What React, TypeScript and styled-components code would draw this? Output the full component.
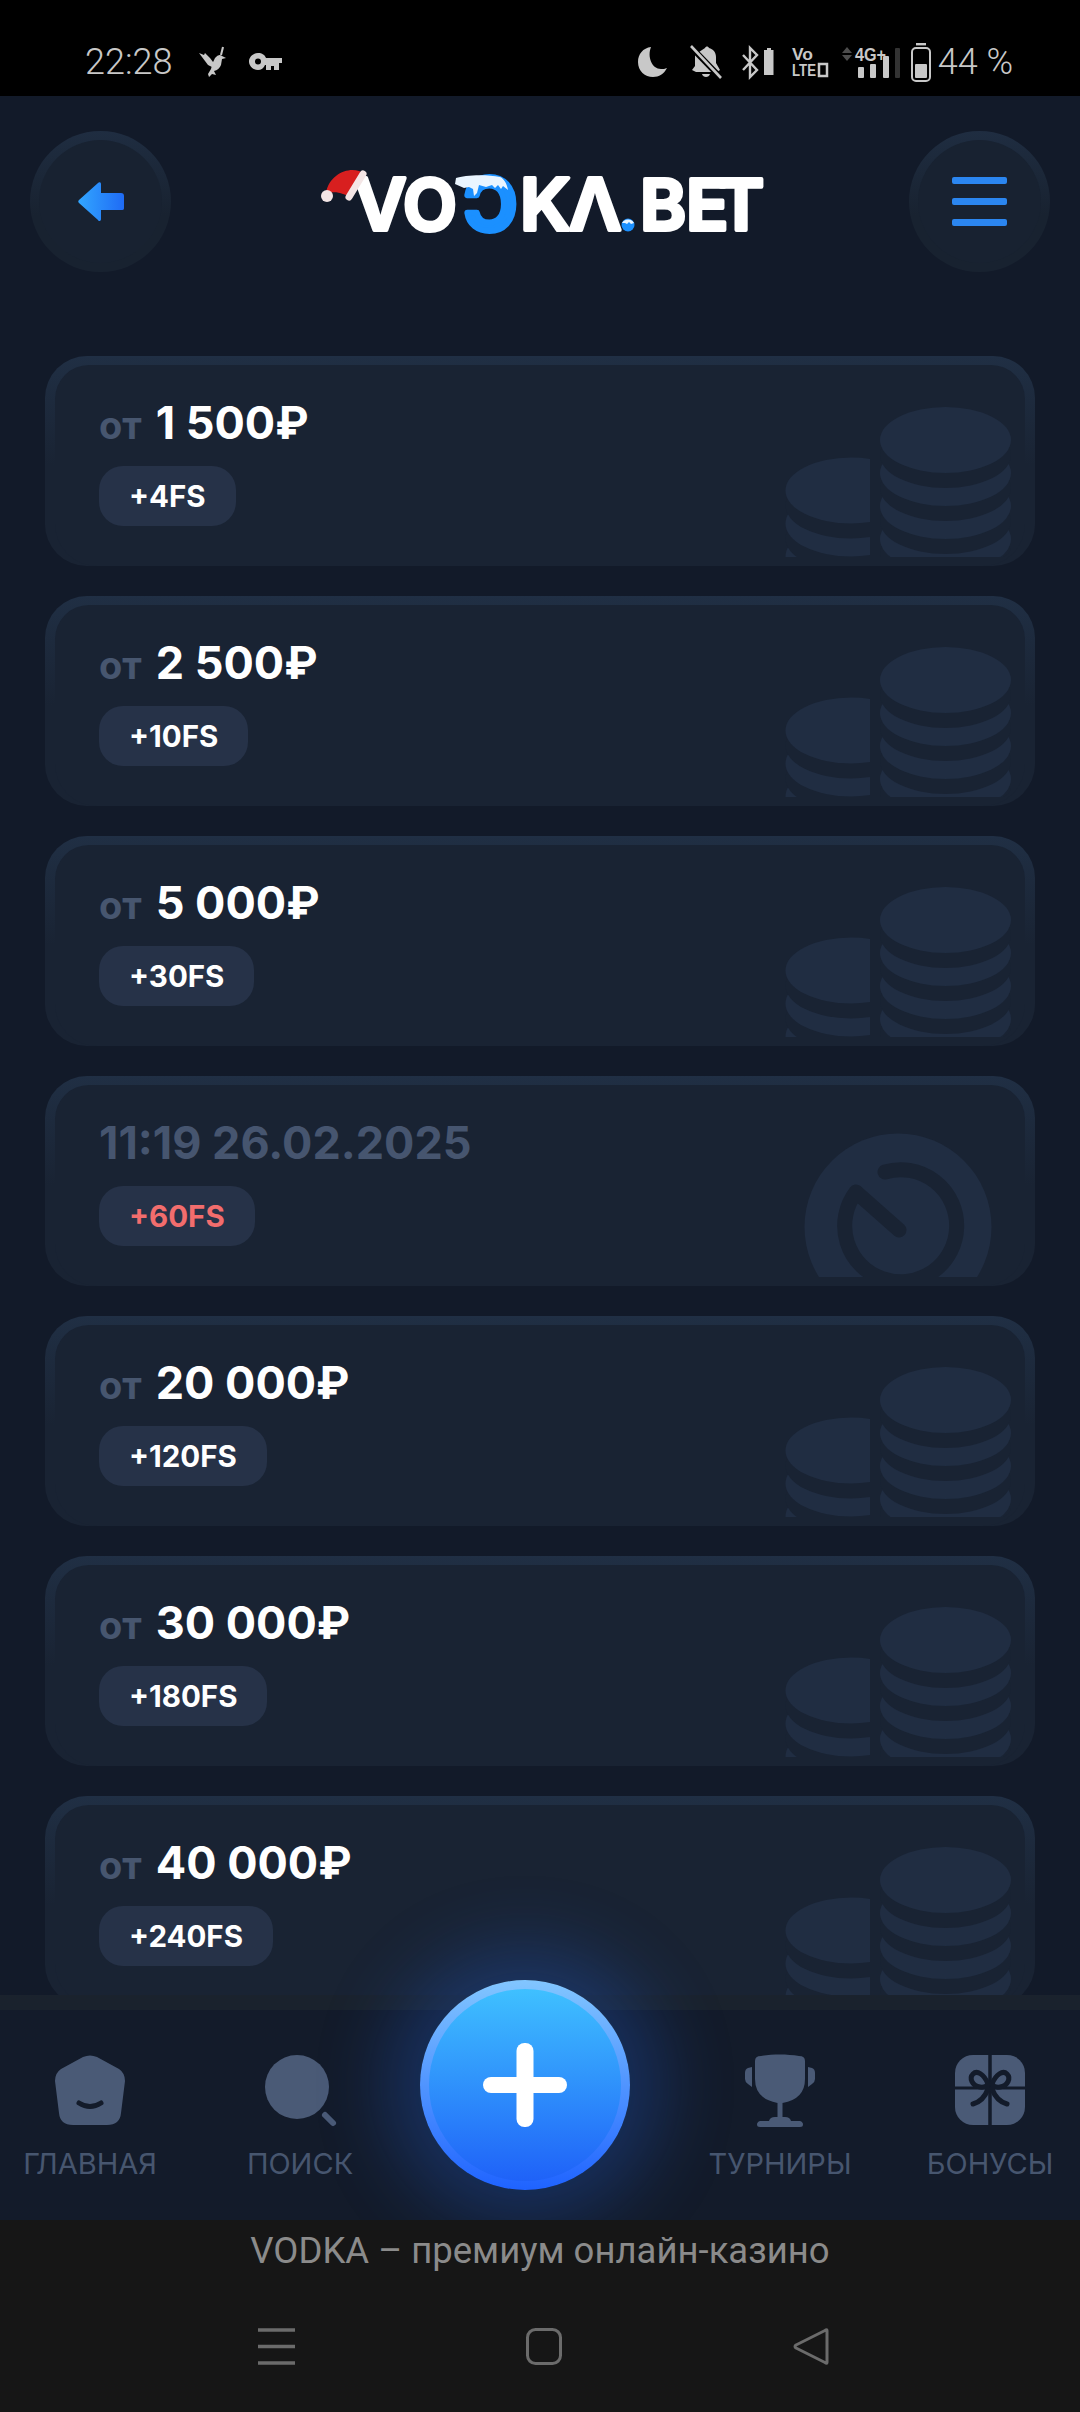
import { FC } from 'react'
import styled, { createGlobalStyle } from 'styled-components'

const GlobalStyle = createGlobalStyle`
  html, body {
    margin: 0;
    padding: 0;
    background: #121a29;
  }
  * {
    box-sizing: border-box;
  }
`

const Screen = styled.div`
  display: flex;
  flex-direction: column;
  width: 1080px;
  height: 2412px;
  overflow: hidden;
  background: #121a29;
  font-family: Inter, 'Liberation Sans', sans-serif;
`

/* status bar */

const StatusBar = styled.div`
  display: flex;
  align-items: center;
  justify-content: space-between;
  flex: none;
  height: 96px;
  padding: 0 67px 0 85px;
  background: #000;
  color: #c8c8c8;
`

const StatusGroup = styled.div`
  display: flex;
  align-items: center;
  height: 48px;
  margin-top: 28px;
`

const StatusText = styled.span`
  font-family: Roboto, 'Liberation Sans', sans-serif;
  font-size: 36px;
  font-weight: 300;
  line-height: 48px;
  white-space: nowrap;
`

const StatusSlot = styled.div<{ $gap: number }>`
  display: flex;
  margin-left: ${({ $gap }) => $gap}px;
`

/* header */

const Main = styled.main`
  flex: 1;
  min-height: 0;
  overflow: hidden;
`

const Header = styled.header`
  display: flex;
  align-items: center;
  justify-content: space-between;
  height: 141px;
  margin-top: 35px;
  padding: 0 30px;
`

const RoundButton = styled.button`
  display: flex;
  align-items: stretch;
  width: 141px;
  height: 141px;
  padding: 9px;
  border: 0;
  border-radius: 50%;
  background: linear-gradient(180deg, #1f2d41 0%, #182230 60%);
`

const RoundInner = styled.span`
  display: flex;
  flex-direction: column;
  align-items: center;
  justify-content: center;
  gap: 14px;
  width: 100%;
  border-radius: 50%;
  background: #182231;
`

const BurgerLine = styled.span`
  width: 55px;
  height: 7px;
  border-radius: 2px;
  background: #2b86f0;
`

const LogoArt = styled.svg`
  overflow: visible;
`

/* bonus cards */

const CardList = styled.div`
  display: flex;
  flex-direction: column;
  gap: 30px;
  margin-top: 84px;
  padding: 0 45px;
`

const Card = styled.div`
  flex: none;
  height: 210px;
  padding: 9px 10px 0;
  border-radius: 42px;
  background: linear-gradient(180deg, #202f44 0%, #192333 52%);
`

const CardInner = styled.div`
  position: relative;
  height: 100%;
  padding: 36px 0 0 44px;
  border-radius: 34px 34px 42px 42px;
  background: #192333;
`

const Amount = styled.div`
  display: flex;
  align-items: baseline;
  gap: 14px;
  height: 44px;
  font-size: 45px;
  font-weight: 700;
  line-height: 44px;
  color: #fff;
`

const From = styled.span`
  font-size: 38px;
  color: #47566f;
`

const DateText = styled.div`
  height: 44px;
  font-size: 45px;
  font-weight: 700;
  line-height: 44px;
  color: #46556f;
`

const Pill = styled.div<{ $expired?: boolean }>`
  display: inline-flex;
  align-items: center;
  height: 60px;
  margin-top: 21px;
  padding: 0 30px;
  border-radius: 24px;
  background: #263248;
  font-size: 29.5px;
  font-weight: 700;
  line-height: 58px;
  color: ${({ $expired }) => ($expired ? '#f26d6d' : '#fff')};
`

const CardArt = styled.svg`
  position: absolute;
  top: 0;
  right: 0;
`

/* bottom nav */

const Nav = styled.nav`
  position: relative;
  display: grid;
  grid-template-columns: 180px 240px 240px 240px 180px;
  flex: none;
  height: 225px;
  border-top: 15px solid #1a222d;
  background: #131b2a;
`

const NavItem = styled.div`
  display: flex;
  flex-direction: column;
  align-items: center;
  padding-top: 45px;
`

const NavIcon = styled.svg`
  display: block;
  width: 70px;
  height: 70px;
  overflow: visible;
  color: #4a5a76;
`

const NavLabel = styled.span`
  margin-top: 22px;
  font-size: 29px;
  line-height: 34px;
  color: #47566f;
  white-space: nowrap;
`

const PlusButton = styled.button`
  position: absolute;
  top: -30px;
  left: 420px;
  display: flex;
  width: 210px;
  height: 210px;
  padding: 9px;
  border: 0;
  border-radius: 50%;
  background: linear-gradient(180deg, #82c6ff 0%, #1f63ff 100%);
  box-shadow: 0 0 70px 34px rgba(36, 102, 225, 0.28);
`

const PlusInner = styled.span`
  display: flex;
  align-items: center;
  justify-content: center;
  width: 100%;
  border-radius: 50%;
  background: linear-gradient(180deg, #3fc0ff 0%, #1f62f8 100%);
`

/* browser + system bars */

const BrowserBar = styled.div`
  position: relative;
  z-index: 2;
  flex: none;
  height: 192px;
  background: #161616;
`

const PageTitle = styled.div`
  padding-top: 9px;
  font-family: Roboto, 'Liberation Sans', sans-serif;
  font-size: 36.5px;
  line-height: 44px;
  text-align: center;
  color: #8b8b8b;
`

const SystemNav = styled.div`
  display: flex;
  align-items: center;
  gap: 231px;
  margin-top: 55px;
  padding-left: 258px;
`

const StatusSvg = styled.svg`
  display: block;
  overflow: visible;
`

const MoonIcon = () => (
  <StatusSvg width="29" height="30" viewBox="0 0 29 30">
    <path
      d="M13 0C5 1 0 7 0 15c0 9 7 15 15 15 6 0 11-3 14-9-2 1-4 1-6 1C14 22 9 10 13 0Z"
      fill="currentColor"
    />
  </StatusSvg>
)

const BellOffIcon = () => (
  <StatusSvg width="32" height="33" viewBox="0 0 32 33">
    <path
      d="M15 2c1-2 3-2 4 0 4 1 7 4 7 9v6l4 7-3 2H6l-4-2 3-4v-9c0-1 0-2 1-3Z"
      fill="currentColor"
    />
    <path d="M12 28h8c-1 4-7 4-8 0Z" fill="currentColor" />
    <path d="M0 0 32 33" stroke="#000" strokeWidth="6" />
    <path d="M1 0 31 32" stroke="currentColor" strokeWidth="2.6" />
  </StatusSvg>
)

const BluetoothIcon = () => (
  <StatusSvg width="33" height="33" viewBox="0 0 33 33">
    <path d="M1 9 15 24 8 31V2l7 7L1 24" fill="none" stroke="currentColor" strokeWidth="2.4" />
    <path d="M25 2h4v2h2.500v25H22V4h3Z" fill="currentColor" />
  </StatusSvg>
)

const VolteIcon = () => (
  <StatusSvg width="36" height="30" viewBox="0 0 36 30">
    <text
      x="0"
      y="13"
      fontFamily="Liberation Sans"
      fontWeight="700"
      fontSize="17"
      fill="currentColor"
      textLength="21"
      lengthAdjust="spacingAndGlyphs"
    >
      Vo
    </text>
    <text
      x="0"
      y="29"
      fontFamily="Liberation Sans"
      fontWeight="700"
      fontSize="16"
      fill="currentColor"
      textLength="24"
      lengthAdjust="spacingAndGlyphs"
    >
      LTE
    </text>
    <path d="M27 17h8v12h-8Z" fill="none" stroke="currentColor" strokeWidth="2.500" />
  </StatusSvg>
)

const SignalIcon = () => (
  <StatusSvg width="58" height="31" viewBox="0 0 58 31">
    <path d="M5 0 10 6H0ZM0 8h10L5 14Z" fill="#4c4c4c" />
    <text
      x="13"
      y="14"
      fontFamily="Liberation Sans"
      fontWeight="700"
      fontSize="18"
      fill="currentColor"
      textLength="31"
      lengthAdjust="spacingAndGlyphs"
    >
      4G+
    </text>
    <rect x="16" y="20" width="6" height="11" rx="1" fill="currentColor" />
    <rect x="28" y="17" width="6" height="14" rx="1" fill="currentColor" />
    <rect x="41" y="9" width="6" height="22" rx="1" fill="currentColor" />
    <rect x="53" y="1" width="5" height="30" rx="1" fill="#333" />
  </StatusSvg>
)

const BatteryIcon = () => (
  <StatusSvg width="20" height="39" viewBox="0 0 20 39">
    <rect x="5" y="0" width="10" height="2.400" fill="currentColor" />
    <rect x="1" y="5" width="18" height="33" rx="4" fill="none" stroke="currentColor" strokeWidth="2" />
    <rect x="4" y="21" width="12" height="14" rx="1" fill="currentColor" />
  </StatusSvg>
)

const DoveIcon = () => (
  <StatusSvg width="28" height="30" viewBox="0 0 28 30">
    <path d="M0 6 5 8 6 6 11 11 14 15 16 18 15 21 9 18 6 14 3 10Z" fill="currentColor" />
    <path
      d="M16 11Q20 6 23 9L27 11 23 12 22 18Q20 23 15 24L17 28 13 27 10 30 9 27 12 22Q13 16 16 11Z"
      fill="currentColor"
    />
    <path d="M24 0 22 8" stroke="currentColor" strokeWidth="2" />
  </StatusSvg>
)

const KeyIcon = () => (
  <StatusSvg width="33" height="18" viewBox="0 0 33 18">
    <path
      fillRule="evenodd"
      d="M9 0c4 0 7 2 8 5h16v5h-3v7h-5v-4h-3v4h-5v-5h-1c-1 3-4 5-7 5-5 0-9-4-9-8.500S4 0 9 0Zm0 5.500a3 3 0 1 0 0 6 3 3 0 0 0 0-6Z"
      fill="currentColor"
    />
  </StatusSvg>
)

const BackArrow = () => (
  <svg width="46" height="39" viewBox="0 0 46 39">
    <defs>
      <linearGradient id="backFill" x1="0" y1="0" x2="1" y2="0">
        <stop offset="0" stopColor="#32a6ff" />
        <stop offset="1" stopColor="#1f6bf5" />
      </linearGradient>
    </defs>
    <path
      d="M20 1c1-1 3-1 3 1v9h20c2 0 3 1 3 3v12c0 2-1 2-3 2H23v9c0 2-2 3-3 1L1 21c-1-1-1-2 0-3Z"
      fill="url(#backFill)"
    />
  </svg>
)

const Logo = () => (
  <LogoArt width="450" height="76" viewBox="-4 -2 450 76">
    <g
      fontFamily="Inter, sans-serif"
      fontSize="72"
      fontWeight="600"
      stroke="#fff"
      strokeWidth="4"
      strokeLinejoin="round"
      fill="#fff"
    >
      <text x="35" y="64">
        V
      </text>
      <text x="84" y="64" fontSize="70">
        O
      </text>
      <text x="201" y="64">
        K
      </text>
      <text x="250" y="64">
        Λ
      </text>
      <text x="321" y="64" fontSize="70">
        B
      </text>
      <text x="367" y="64" fontSize="70">
        E
      </text>
      <text x="399" y="64" fontSize="70">
        T
      </text>
      <text x="145" y="64" fill="#1b90ff" stroke="#1b90ff" strokeWidth="6">
        Ɔ
      </text>
    </g>
    <circle cx="309" cy="59" r="6.500" fill="#1b90ff" />
    <path d="M303 57c2-4 9-5 12 0l-3 1-2-2-2 2-2-1Z" fill="#e8f4ff" />
    <path
      d="M137 12c8-3 30-4 44-1 3 1 7 6 8 13l-5-4-2 3-3-4-3 3-3-3-6 2-7-2-2 8-3 3-1-7-4-2-5 1-9-4Z"
      fill="#eaf5ff"
    />
    <path d="M7 27C10 9 28 1 40 5c3 1 4 4 4 8l-11 18-9-3c-5-2-10-2-17-1Z" fill="#d81f1f" />
    <path d="M44 8 30 31" stroke="#f4e6e6" strokeWidth="7" strokeLinecap="round" />
    <circle cx="8" cy="30" r="6" fill="#f4e6e6" />
  </LogoArt>
)

const CoinStack: FC<{ cx: number; top: number; count: number }> = ({ cx, top, count }) => {
  const centers = Array.from({ length: count }, (_, i) => top + i * 33).reverse()
  return (
    <>
      {centers.map((cy, i) => (
        <g key={cy}>
          <ellipse cx={cx} cy={cy} rx="65.500" ry="33" fill="#202d42" />
          {i < centers.length - 1 && <ellipse cx={cx} cy={cy - 18} rx="65.500" ry="33" fill="#192333" />}
        </g>
      ))}
    </>
  )
}

const CoinsArt = () => (
  <CardArt width="300" height="192" viewBox="0 0 300 192">
    <defs>
      <clipPath id="coinsLeft">
        <rect x="0" y="0" width="145" height="192" />
      </clipPath>
      <clipPath id="coinsRight">
        <path d="M150 0h136v180c0 8-4 12-12 12H150Z" />
      </clipPath>
    </defs>
    <g clipPath="url(#coinsLeft)">
      <CoinStack cx={126} top={125.5} count={3} />
    </g>
    <g clipPath="url(#coinsRight)">
      <CoinStack cx={220.5} top={75} count={5} />
    </g>
  </CardArt>
)

const TimerArt = () => (
  <CardArt width="300" height="192" viewBox="0 0 300 192">
    <circle cx="173" cy="142" r="93.500" fill="#202d42" />
    <path
      d="M160 87A56 56 0 1 1 131 107L174 145"
      fill="none"
      stroke="#192333"
      strokeWidth="15"
      strokeLinecap="round"
      strokeLinejoin="round"
    />
  </CardArt>
)

type Bonus = {
  amount?: string
  date?: string
  fs: string
}

const bonuses: Bonus[] = [
  { amount: '1 500₽', fs: '+4FS' },
  { amount: '2 500₽', fs: '+10FS' },
  { amount: '5 000₽', fs: '+30FS' },
  { date: '11:19 26.02.2025', fs: '+60FS' },
  { amount: '20 000₽', fs: '+120FS' },
  { amount: '30 000₽', fs: '+180FS' },
  { amount: '40 000₽', fs: '+240FS' },
]

const BonusCard: FC<Bonus> = ({ amount, date, fs }) => (
  <Card>
    <CardInner>
      {date ? (
        <DateText>{date}</DateText>
      ) : (
        <Amount>
          <From>от</From>
          {amount}
        </Amount>
      )}
      <Pill $expired={!!date}>{fs}</Pill>
      {date ? <TimerArt /> : <CoinsArt />}
    </CardInner>
  </Card>
)

const App = () => {
  return (
    <Screen>
      <GlobalStyle />
      <StatusBar>
        <StatusGroup>
          <StatusText>22:28</StatusText>
          <StatusSlot $gap={27}>
            <DoveIcon />
          </StatusSlot>
          <StatusSlot $gap={22}>
            <KeyIcon />
          </StatusSlot>
        </StatusGroup>
        <StatusGroup>
          <MoonIcon />
          <StatusSlot $gap={23}>
            <BellOffIcon />
          </StatusSlot>
          <StatusSlot $gap={20}>
            <BluetoothIcon />
          </StatusSlot>
          <StatusSlot $gap={17}>
            <VolteIcon />
          </StatusSlot>
          <StatusSlot $gap={14}>
            <SignalIcon />
          </StatusSlot>
          <StatusSlot $gap={11}>
            <BatteryIcon />
          </StatusSlot>
          <StatusSlot $gap={7}>
            <StatusText>44 %</StatusText>
          </StatusSlot>
        </StatusGroup>
      </StatusBar>

      <Main>
        <Header>
          <RoundButton>
            <RoundInner>
              <BackArrow />
            </RoundInner>
          </RoundButton>
          <Logo />
          <RoundButton>
            <RoundInner>
              <BurgerLine />
              <BurgerLine />
              <BurgerLine />
            </RoundInner>
          </RoundButton>
        </Header>
        <CardList>
          {bonuses.map((bonus) => (
            <BonusCard key={bonus.fs} {...bonus} />
          ))}
        </CardList>
      </Main>

      <Nav>
        <NavItem>
          <NavIcon viewBox="0 0 70 70">
            <path
              d="M28 2Q35-1 42 2L64 14Q70 18 70 26L66 58Q65 70 52 70H18Q5 70 4 58L0 26Q0 18 6 14Z"
              fill="currentColor"
            />
            <path d="M24 48Q35 55 46 48" fill="none" stroke="#131b2a" strokeWidth="5" strokeLinecap="round" />
          </NavIcon>
          <NavLabel>ГЛАВНАЯ</NavLabel>
        </NavItem>
        <NavItem>
          <NavIcon viewBox="0 0 70 70">
            <circle cx="32" cy="32" r="32" fill="currentColor" />
            <path d="M60 60 68 68" stroke="currentColor" strokeWidth="6" strokeLinecap="round" />
          </NavIcon>
          <NavLabel>ПОИСК</NavLabel>
        </NavItem>
        <div />
        <NavItem>
          <NavIcon viewBox="0 0 70 70">
            <path
              d="M10 6Q10 1 16 1C28-1 42-1 54 1Q60 1 60 6V24Q60 44 37.500 48V62H32.500V48Q10 44 10 24Z"
              fill="currentColor"
            />
            <path
              d="M24 66Q25 62 30 62H40Q45 62 46 66H55Q58 67 58 69.500 58 72 55 72H15Q12 72 12 69.500 12 67 15 66Z"
              fill="currentColor"
            />
            <path
              d="M7 12 3 13Q0 14 0 18V24Q0 27 3 29L7 32ZM63 12 67 13Q70 14 70 18V24Q70 27 67 29L63 32Z"
              fill="currentColor"
            />
          </NavIcon>
          <NavLabel>ТУРНИРЫ</NavLabel>
        </NavItem>
        <NavItem>
          <NavIcon viewBox="0 0 70 70">
            <rect width="70" height="70" rx="18" fill="currentColor" />
            <path d="M35 0V70" stroke="#131b2a" strokeWidth="3.500" />
            <path d="M0 33H70" stroke="#131b2a" strokeWidth="3" />
            <path
              d="M33 29C29 19 22 15 18 19 14 23 17 31 25 32 29 32.500 32 31 33 29ZM37 29C41 19 48 15 52 19 56 23 53 31 45 32 41 32.500 38 31 37 29ZM33 34C30 42 25 47 18 49M37 34C40 42 45 47 52 49"
              fill="none"
              stroke="#131b2a"
              strokeWidth="5"
              strokeLinecap="round"
            />
          </NavIcon>
          <NavLabel>БОНУСЫ</NavLabel>
        </NavItem>
        <PlusButton>
          <PlusInner>
            <svg width="84" height="84" viewBox="0 0 84 84">
              <rect x="33.500" width="17" height="84" rx="8" fill="#fff" />
              <rect y="34" width="84" height="16" rx="8" fill="#fff" />
            </svg>
          </PlusInner>
        </PlusButton>
      </Nav>

      <BrowserBar>
        <PageTitle>VODKA – премиум онлайн-казино</PageTitle>
        <SystemNav>
          <svg width="37" height="37" viewBox="0 0 37 37">
            <path d="M0 2H37M0 18.500H37M0 35H37" stroke="#6b6b6b" strokeWidth="3.500" />
          </svg>
          <svg width="36" height="37" viewBox="0 0 36 37">
            <rect x="1.500" y="1.500" width="33" height="34" rx="8" fill="none" stroke="#6b6b6b" strokeWidth="3" />
          </svg>
          <svg width="36" height="37" viewBox="0 0 36 37">
            <path
              d="M34 2.500Q34 1 32 2.500L3 17Q1 18.500 3 20L32 34.500Q34 36 34 34.500Z"
              fill="none"
              stroke="#6b6b6b"
              strokeWidth="3"
              strokeLinejoin="round"
            />
          </svg>
        </SystemNav>
      </BrowserBar>
    </Screen>
  )
}

export default App
